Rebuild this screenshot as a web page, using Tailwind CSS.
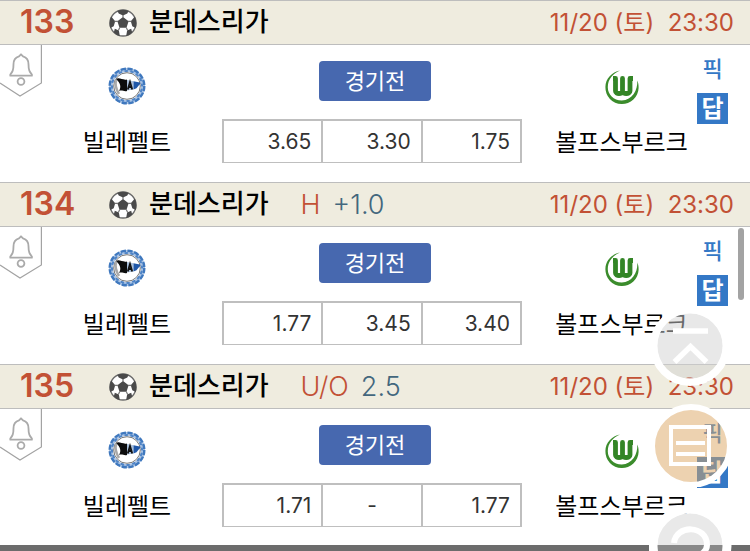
<!DOCTYPE html>
<html lang="ko">
  <head>
    <meta charset="UTF-8" />
    <meta name="viewport" content="width=device-width, initial-scale=1.0" />
    <title>경기 목록</title>
    <script src="https://cdn.jsdelivr.net/npm/@tailwindcss/browser@4"></script>
  </head>
  <body class="bg-white font-[Inter,'Noto_Sans_CJK_KR',sans-serif] text-black overflow-hidden">
    <!-- icons -->
    <svg class="hidden">
      <symbol id="ball" viewBox="0 0 28 28">
        <circle cx="14" cy="14" r="13" fill="#fff" stroke="#6a6a6a" stroke-width="1.400" />
        <path fill="#4a4a4a" d="M14 8l5.600 4.200-2.100 6.500h-7l-2.100-6.500zM8.500 2Q14-.5 19.500 2L18.300 4.600 14 6.400 9.700 4.600zM25.800 7.500Q28.500 13 26.800 19L23.300 17.300 21.800 12.300zM2.200 7.500Q-.5 13 1.200 19L4.700 17.300 6.200 12.300zM4.800 23.600L5.800 19.700 9.900 21.600 10.800 27Q7 26.200 4.800 23.600zM23.200 23.600L22.200 19.700 18.100 21.600 17.200 27Q21 26.200 23.200 23.600z" />
        <path fill="none" stroke="#777" stroke-width="1.200" d="M14 6v3M19 12.300h3.400M9 12.300h-3.400M17.200 18.500l1.500 3M10.800 18.500l-1.500 3" />
      </symbol>
      <symbol id="bell" viewBox="0 0 42 52">
        <path fill="#fff" stroke="#a3a3a3" stroke-width="1.200" d="M41.400 0V38L20 51 0 38" />
        <path fill="none" stroke="#aaa" stroke-width="1.800" stroke-linejoin="round" d="M21 9.300l-2 2c-4 1-5.500 4-5.500 8 0 6-1 7.500-3.200 10.200v1.200h21.600v-1.200c-2.300-2.700-3.400-4.200-3.400-10.200 0-4-1.500-7-5.500-8z" />
        <circle cx="21" cy="36.500" r="3.400" fill="none" stroke="#aaa" stroke-width="1.800" />
      </symbol>
      <symbol id="bielefeld" viewBox="0 0 38 38">
        <circle cx="19" cy="19" r="16" fill="none" stroke="#a9c3e4" stroke-width="4" />
        <circle cx="19" cy="19" r="17.300" fill="none" stroke="#3f78be" stroke-width="2.400" stroke-dasharray="5.200 1.590" />
        <circle cx="19" cy="19" r="15" fill="none" stroke="#4f84c6" stroke-width="2" stroke-dasharray="3.400 2.490" stroke-dashoffset="3" />
        <circle cx="19" cy="19" r="13.300" fill="#fff" stroke="#777" stroke-width="1" />
        <path stroke="#aaa" stroke-width="2.600" d="M8.300 12.500c-2 5 0 10 2.700 14.500" fill="none" />
        <path fill="#0c0c0c" d="M8 12c3.500-2 6.500 1.500 11 .5V24c-3 1-5-1.500-8 0 2.500-4 1.500-8-3-12z" />
        <path fill="#a9bfda" d="M19 13l6.500 1.200v8.300L19 23.500z" />
        <path fill="#1f57a8" d="M25.500 14.200l7.500 1.500-4.500 5.500-3 1.300z" />
        <path fill="none" stroke="#111" stroke-width="1.800" d="M19.800 22.500l2.200-7.500 2.200 7.500M20.500 20h3.200" />
      </symbol>
      <symbol id="wolfsburg" viewBox="0 0 36 36">
        <path fill="#3b8c2c" d="M16 1.500C8 3 1.400 9.500 1.400 18a16.600 16.600 0 0 0 33.200 1c.1-3-.3-5-1.300-7.500 .6 9.500-5 19.700-15.500 20C9.500 31.500 3.800 25.500 3.800 18.300 3.800 10 9 4.500 16 1.500z" />
        <path fill="none" stroke="#338526" stroke-width="4.800" stroke-linejoin="round" d="M9 9.500h2.500v12.500c0 3.500 7 3.500 7 0V9.500 22c0 3.500 7.500 3.500 7.500 0V9.500h3" />
      </symbol>
    </svg>

    <main id="matchList"></main>

    <!-- scroll thumb -->
    <div class="absolute right-1.5 top-[228px] w-1.5 h-[72px] rounded-full bg-[#a3a3a3]"></div>

    <div class="fixed bottom-0 inset-x-0 h-1.5 bg-[#6c6c6c]"></div>

    <!-- quick buttons -->
    <nav class="fixed right-[17px] top-[307px] flex flex-col items-center">
      <button aria-label="맨 위로" class="block cursor-pointer">
        <svg class="size-[84px]" viewBox="0 0 84 84">
          <circle cx="41" cy="39" r="33" fill="#d2d2d2" fill-opacity=".5" />
          <circle cx="41" cy="39" r="36.300" fill="none" stroke="#fff" stroke-width="7.500" />
          <path fill="none" stroke="#fff" stroke-width="5.500" d="M24 24h35M25.500 55L41.500 39.500 57.500 55" />
        </svg>
      </button>
      <button aria-label="메모" class="block mt-3 cursor-pointer">
        <svg class="size-[84px]" viewBox="0 0 84 84">
          <circle cx="42" cy="43" r="37" fill="#dba561" fill-opacity=".5" />
          <circle cx="42" cy="43" r="39" fill="none" stroke="#fff" stroke-width="6" />
          <path fill="none" stroke="#fff" stroke-width="4" d="M22 24h38v37H22zM27 40h29M27 51h29" />
        </svg>
      </button>
      <button aria-label="도움말" class="block mt-2 cursor-pointer">
        <svg class="size-[84px]" viewBox="0 0 84 84">
          <circle cx="41" cy="51" r="33" fill="#c0c0c0" fill-opacity=".35" />
          <circle cx="41" cy="51" r="37" fill="none" stroke="#fff" stroke-width="9" />
          <path fill="none" stroke="#fff" stroke-width="6" d="M25 48c2-19 33-18 33 2 0 6-5 9-14 14" />
        </svg>
      </button>
    </nav>

    <script>
      const matches = [
        { no: 133, type: "", value: "", odds: ["3.65", "3.30", "1.75"] },
        { no: 134, type: "H", value: "+1.0", odds: ["1.77", "3.45", "3.40"] },
        { no: 135, type: "U/O", value: "2.5", odds: ["1.71", "-", "1.77"] },
      ];

      function renderMatches() {
        const matchList = document.getElementById("matchList");
        matches.forEach((match) => {
          const section = document.createElement("section");
          section.className = "pb-[19px]";
          section.innerHTML = `
            <header class="flex items-center h-[45px] pl-5 pr-4 bg-[#efecdf] border-y border-[#bdbdbd] text-2xl text-[#c25135]">
              <span class="w-[89px] text-[32px] font-semibold">${match.no}</span>
              <svg class="size-7 shrink-0"><use href="#ball" /></svg>
              <h2 class="ml-3 text-[26px] font-medium text-black">분데스리가</h2>
              <span class="ml-8 text-[27px] font-light">${match.type}</span>
              <span class="ml-3 text-[27px] font-light text-[#43677d]">${match.value}</span>
              <time class="ml-auto whitespace-pre">11/20 (토)  23:30</time>
            </header>
            <div class="relative grid grid-cols-[222fr_300fr_175fr_53fr] h-[118px]">
              <button aria-label="알림" class="absolute left-0 top-0 cursor-pointer">
                <svg class="w-[42px] h-[52px]"><use href="#bell" /></svg>
              </button>
              <div class="flex flex-col items-center pl-8 pt-[22px]">
                <svg class="size-[38px]"><use href="#bielefeld" /></svg>
                <p class="mt-5 text-2xl leading-9">빌레펠트</p>
              </div>
              <div class="flex flex-col justify-between pt-4">
                <div class="pl-1.5 text-center">
                  <button class="w-28 h-10 rounded bg-[#4768af] text-white text-[22px] cursor-pointer">경기전</button>
                </div>
                <div class="grid grid-cols-3 h-11 border-t-2 border-l-2 border-b border-[#bfbfbf]">
                  ${match.odds
                    .map((odd) => `<button class="border-r-2 border-[#bfbfbf] text-[21px] text-[#333] cursor-pointer ${odd === "-" ? "text-center" : "text-right pr-2.5"}">${odd}</button>`)
                    .join("")}
                </div>
              </div>
              <div class="flex flex-col items-center pl-6 pt-6">
                <svg class="size-9"><use href="#wolfsburg" /></svg>
                <p class="mt-5 text-2xl leading-9 whitespace-nowrap">볼프스부르크</p>
              </div>
              <div class="flex flex-col items-start pt-2">
                <button class="w-[31px] h-8 text-[22px] leading-8 font-medium text-[#3478c6] cursor-pointer">픽</button>
                <button class="mt-2 w-[31px] h-[31px] bg-[#3478c6] text-white text-2xl leading-7 font-bold cursor-pointer">답</button>
              </div>
            </div>
          `;
          matchList.appendChild(section);
        });
      }

      document.addEventListener("DOMContentLoaded", renderMatches);
    </script>
  </body>
</html>
